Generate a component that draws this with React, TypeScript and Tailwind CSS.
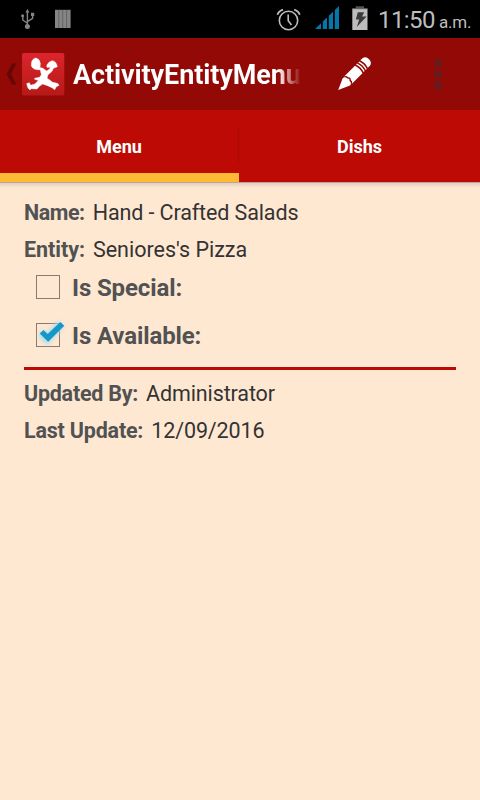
function StatusBar() {
  return (
    <div className="flex h-[38px] shrink-0 bg-black text-[#bebebe]">
      <svg className="h-[38px] w-[80px]" viewBox="0 0 80 38">
        <g stroke="#858585" fill="none" strokeWidth="1.4">
          <path d="M27.4 12v15M27.4 23.2l-4.6-3.2v-3.4M27.4 21.6l5.2-3.2v-3" />
        </g>
        <g fill="#858585">
          <circle cx="27.4" cy="26.5" r="2.5" />
          <path d="M27.4 9l2 3.6h-4z" />
          <circle cx="22.6" cy="15.8" r="1.5" />
          <path d="M31 12.8h3.2v3.2H31z" />
          <path d="M55 9.8h15.6v18.2H55z" />
        </g>
        <path d="M58.8 10v18M62.7 10v18M66.6 10v18" stroke="#555" strokeWidth="0.7" />
      </svg>
      <div className="flex-1" />
      <svg className="h-[38px] w-[110px]" viewBox="268 0 110 38">
        <g fill="none" stroke="#bebebe">
          <circle cx="288.5" cy="20.5" r="9.2" strokeWidth="1.6" />
          <path d="M288.2 14.5v6.2l3.3 4.3" strokeWidth="1.6" />
          <path d="M277.4 14.8q1.3-3.8 5.6-5.2M299.8 14.8q-1.3-3.8-5.6-5.2" strokeWidth="1.8" />
        </g>
        <path
          fill="#0575aa"
          d="M315 29l6-5.7V29zM322.8 21.5l4.2-4V29h-4.2zM328.8 15.8l4.2-4V29h-4.2zM334.8 10l4.2-4V29h-4.2z"
        />
        <path d="M352.3 8.8h15.2V30h-15.2z" fill="#bebebe" />
        <path d="M355.7 6.3h8.4v2.5h-8.4z" fill="#555" />
        <path d="M352.3 8.2h15.2v1h-15.2z" fill="#666" />
        <path d="M357.8 12.2h6.4l-2.2 4.2h4.6L356.8 27l2.4-7.4h-3.4z" fill="#3b3b3b" />
      </svg>
      <div className="flex w-[102px] items-baseline whitespace-nowrap leading-[40px]">
        <span className="w-[61px] text-[24px] tracking-[-0.6px]">11:50</span>
        <span className="text-[17px] tracking-[-0.2px]">a.m.</span>
      </div>
    </div>
  );
}

function ActionBar() {
  return (
    <div className="flex h-[72px] shrink-0 items-center bg-[#920905]">
      <svg className="h-[72px] w-[73px] shrink-0" viewBox="0 38 73 72">
        <defs>
          <linearGradient id="logo" x1="0" y1="0" x2="0" y2="1">
            <stop offset="0" stopColor="#dc252c" />
            <stop offset="1" stopColor="#b51a18" />
          </linearGradient>
        </defs>
        <path d="M12.2 63.5h4L11.2 74l5 10.6h-4L6.5 74z" fill="#650805" />
        <rect x="22" y="53" width="42.3" height="42.5" rx="1.8" fill="url(#logo)" />
        <g transform="scale(.33333)" fill="#fff" stroke="#fff" strokeWidth="1.5" strokeLinejoin="round">
          <path d="M94 193Q95 176 107 174Q119 176 121 190L120 203L127 204L140 213L149 207L151 202L141 202Q139 199 142 193Q147 184 157 182Q169 184 172 200L160 205L156 214L144 224L141 235L148 239L158 247L168 249L174 251L177 256L169 260L164 269L156 263L143 257L128 252L118 259L111 267L93 266L90 270L84 264L80 251L88 248L92 256L105 252L115 241L104 238L104 235L119 232L124 224L121 209Q111 210 103 207Q93 202 94 193Z" />
        </g>
      </svg>
      <div className="mt-[2px] w-[228px] shrink-0 overflow-hidden whitespace-nowrap bg-linear-to-r from-white from-90% to-transparent bg-clip-text text-[27px] leading-[36px] font-bold tracking-[-0.12px] text-transparent">
        ActivityEntityMenu
      </div>
      <svg className="h-[72px] w-[179px] shrink-0" viewBox="301 38 179 72">
        <g transform="translate(338.2 90) rotate(-45)" fill="#fff">
          <path d="M0 0l11.5-5.2q3.2.4 3 3.6 2 1.6 0 3.2.2 3.2-3 3.6z" />
          <path d="M13.4-5.3H29q1.8 5.3 0 10.6H13.4q2.8-.3 2.6-3.4 2-1.9 0-3.8.2-3.1-2.6-3.4z" />
          <path d="M30.6-5.3h1.4q1.8 5.3 0 10.6h-1.4q1.8-5.3 0-10.6zM33.6-5.3h1.4q1.8 5.3 0 10.6h-1.4q1.8-5.3 0-10.6zM36.6-5.3h3q4 .8 4 5.3t-4 5.3h-3q1.8-5.3 0-10.6z" />
        </g>
        <path d="M434 59.5h8v7.5h-8zM434 70.3h8V78h-8zM434 81.3h8V89h-8z" fill="#6a1a1b" />
      </svg>
    </div>
  );
}

function Tabs() {
  return (
    <div className="grid h-[72px] shrink-0 grid-cols-[239px_241px] bg-[#bd0a05] text-center text-[18px] font-bold text-white">
      <div className="flex flex-col">
        <div className="flex h-[63px] items-end">
          <div className="mb-[9px] h-9 flex-1 border-r border-[#ad0905] leading-[38px] tracking-[-0.1px]">Menu</div>
        </div>
        <div className="h-[9px] bg-[#ffba35]" />
      </div>
      <div className="leading-[74px]">Dishs</div>
    </div>
  );
}

type FieldProps = { label: string; value: string; labelClass?: string; valueClass?: string };

function Field({ label, value, labelClass = "tracking-[-0.25px]", valueClass = "tracking-[-0.12px]" }: FieldProps) {
  return (
    <div className="flex h-[29px] gap-2 whitespace-nowrap text-[21.5px] leading-[30px]">
      <span className={`font-bold text-[#525252] ${labelClass}`}>{label}</span>
      <span className={`text-[#333] ${valueClass}`}>{value}</span>
    </div>
  );
}

function CheckRow({ label, checked = false }: { label: string; checked?: boolean }) {
  return (
    <div className="flex h-12 items-center">
      <svg className="h-12 w-12" viewBox="0 0 48 48">
        <rect x="12.5" y="11.5" width="23" height="23" fill="none" stroke="#887c72" />
        {checked && (
          <>
            <path d="M17 21l6 6L37 12" fill="none" stroke="#a7dced" strokeWidth="8" className="blur-[2px]" />
            <path d="M15.7 21.5l3.7-3.5 4.3 4L36.3 10l4 3.7L24.2 29.7z" fill="#1598c8" />
          </>
        )}
      </svg>
      <span className="text-[24px] font-bold tracking-[-0.12px] text-[#525252]">{label}</span>
    </div>
  );
}

export default function App() {
  return (
    <div className="flex h-[800px] w-[480px] flex-col overflow-hidden bg-[#ffe8d2] font-['Roboto',sans-serif]">
      <StatusBar />
      <ActionBar />
      <Tabs />
      <div className="h-px shrink-0 bg-[#b9a898]" />
      <div className="h-[5px] shrink-0 bg-linear-to-b from-[#e5cfbb] to-[#ffe8d2]" />
      <main className="flex flex-col px-6 pt-[10px]">
        <Field label="Name:" value="Hand - Crafted Salads" labelClass="tracking-[-0.45px]" />
        <div className="h-2" />
        <Field label="Entity:" value="Seniores's Pizza" labelClass="tracking-[-0.05px]" valueClass="tracking-[0px]" />
        <CheckRow label="Is Special:" />
        <CheckRow label="Is Available:" checked />
        <div className="mt-[7px] mb-[9px] h-[3px] bg-[#bd0a05]" />
        <Field label="Updated By:" value="Administrator" />
        <div className="h-2" />
        <Field label="Last Update:" value="12/09/2016" labelClass="tracking-[-0.2px]" />
      </main>
    </div>
  );
}
